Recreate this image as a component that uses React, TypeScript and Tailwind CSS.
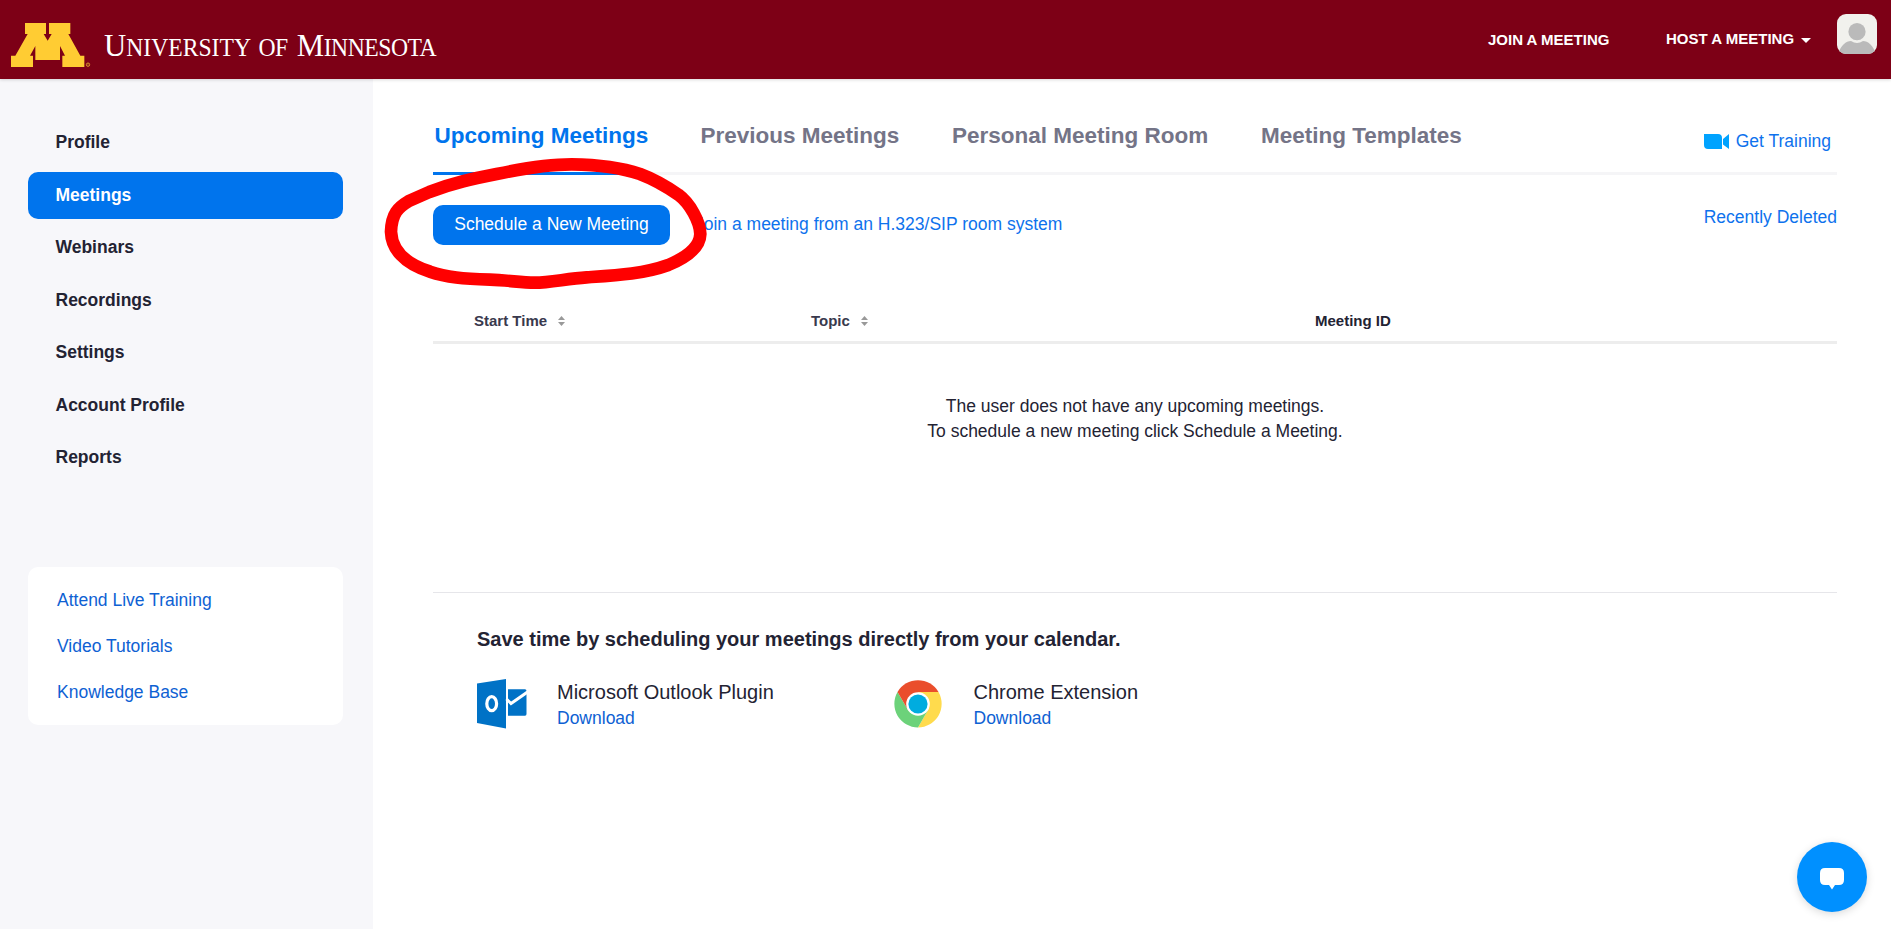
import React from 'react';

const navItems = ['Profile', 'Meetings', 'Webinars', 'Recordings', 'Settings', 'Account Profile', 'Reports'];
const helpLinks = ['Attend Live Training', 'Video Tutorials', 'Knowledge Base'];

function LogoMark() {
  return (
    <svg className="ml-[11px] mt-[23px] h-[45px] w-[80px] shrink-0" viewBox="33 69 240 135">
      <path
        fill="#ffcc33"
        d="M75 69H138V102H131L143 122L155 102H147V69H211V102H205L241 167H253V201H187V167H195L180 138V180H106V138L90 167H99V201H33V167H46L83 102H75Z"
      />
      <circle cx="264" cy="194" r="5" fill="none" stroke="#d99a2c" strokeWidth="3" />
      <circle cx="264" cy="194" r="1.5" fill="#d99a2c" />
    </svg>
  );
}

function Wordmark() {
  return (
    <div className="ml-[13px] mt-[21px] flex h-[48px] w-[340px] origin-left scale-x-[0.946] items-baseline whitespace-nowrap font-['Liberation_Serif',serif] text-[25px] leading-[48px] text-white">
      <span><span className="text-[32.5px]">U</span>NIVERSITY</span>
      <span className="ml-[8px] tracking-[-0.8px]">OF</span>
      <span className="ml-[10px] tracking-[-0.5px]"><span className="text-[32.5px]">M</span>INNESOTA</span>
    </div>
  );
}

function Header() {
  return (
    <header className="relative z-10 flex h-[79px] bg-[#7d0016] shadow-[0_1px_3px_rgba(0,0,0,0.15)]">
      <LogoMark />
      <Wordmark />
      <div className="ml-auto flex text-[15px] leading-[20px] font-bold whitespace-nowrap text-white">
        <a className="mt-[30px] w-[178px]">JOIN A MEETING</a>
        <a className="mt-[29px] flex w-[171px]">
          HOST A MEETING
          <span className="mt-[9px] ml-[7px] h-0 w-0 border-x-[5px] border-t-[5px] border-x-transparent border-t-white" />
        </a>
        <svg className="mt-[14px] mr-[14px] h-10 w-10 rounded-[9px]" viewBox="0 0 40 40">
          <rect width="40" height="40" fill="#f1f1ed" />
          <circle cx="20" cy="17.7" r="8.6" fill="#bababa" />
          <path d="M1 40C4 31 9 27 14 27C18 29.500 22 29.500 26 27C31 27 36 31 39 40Z" fill="#bababa" />
        </svg>
      </div>
    </header>
  );
}

function Sidebar() {
  return (
    <aside className="w-[373px] shrink-0 bg-[#f7f7fa] px-[28px] pt-[40.5px]">
      <nav className="mr-[2px] flex flex-col gap-[5.5px]">
        {navItems.map((item) => (
          <a
            key={item}
            className={
              item === 'Meetings'
                ? 'flex h-[47px] items-center rounded-[10px] bg-[#0074ed] pb-px pl-[27.5px] font-bold text-white'
                : 'flex h-[47px] items-center pb-px pl-[27.5px] font-bold text-[#232333]'
            }
          >
            {item}
          </a>
        ))}
      </nav>
      <div className="mt-[85.5px] mr-[2px] flex h-[158px] flex-col gap-[21px] rounded-[10px] bg-white pt-[21px] pl-[29px] text-[#0e61d3]">
        {helpLinks.map((link) => (
          <a key={link}>{link}</a>
        ))}
      </div>
    </aside>
  );
}

function Tabs() {
  return (
    <div className="flex h-[96px] border-b-[3px] border-[#f5f5f7]">
      <div className="flex text-[22.5px] leading-[30px] font-bold whitespace-nowrap text-[#747487]">
        <a className="h-[96px] w-[216px] border-b-[3px] border-[#0074ed] pt-[42px] pl-[1.5px] text-[#0074ed]">Upcoming Meetings</a>
        <a className="ml-[51.5px] w-[251.5px] pt-[42px]">Previous Meetings</a>
        <a className="w-[309px] pt-[42px]">Personal Meeting Room</a>
        <a className="pt-[42px]">Meeting Templates</a>
      </div>
      <a className="mt-[50px] mr-[6px] ml-auto flex h-[25px] items-start gap-[7px] whitespace-nowrap text-[#0e72ed]">
        <svg className="mt-[5px] h-[15px] w-[25px]" viewBox="0 0 25 15">
          <path d="M0 0H14Q18 0 18 4V15H4Q0 15 0 11ZM19 5L25 0V15L19 10.500Z" fill="#00a3ff" />
        </svg>
        Get Training
      </a>
    </div>
  );
}

function SortIcon() {
  return (
    <svg className="mt-[5px] ml-[11px] h-[10px] w-[7px]" viewBox="0 0 7 10">
      <path d="M0 4L3.500 0L7 4ZM0 6L3.500 10L7 6Z" fill="#999" />
    </svg>
  );
}

function TableHead() {
  return (
    <div className="mt-[66px] flex h-[33px] border-b-[3px] border-[#ededed] text-[15px] leading-[20px] font-bold text-[#39394d]">
      <div className="flex w-[378px] pl-[41px]">Start Time<SortIcon /></div>
      <div className="flex w-[504px]">Topic<SortIcon /></div>
      <div className="text-[#232333]">Meeting ID</div>
    </div>
  );
}

function OutlookIcon() {
  return (
    <svg className="h-[50px] w-[50px]" viewBox="0 0 50 50">
      <path d="M0 4.500L29 0V49.500L0 44Z" fill="#0072c6" />
      <path d="M31 10.300H48Q49.500 10.300 49.500 12V35Q49.500 36.700 48 36.700H31Z" fill="#0072c6" />
      <path d="M29.500 20L34 24.500L50.500 13" fill="none" stroke="#fff" strokeWidth="3" />
      <ellipse cx="14.700" cy="24.700" rx="4.900" ry="7" fill="none" stroke="#fff" strokeWidth="3.200" />
    </svg>
  );
}

function ChromeIcon() {
  return (
    <svg className="mt-px h-[48px] w-[48px]" viewBox="0 0 48 48">
      <path d="M24 24L3.500 12A23.700 23.700 0 0 1 44.500 12Z" fill="#ea4e2c" />
      <path d="M24 12H44.500A23.700 23.700 0 0 1 24 47.500L34 30Z" fill="#ffdb4d" />
      <path d="M3.500 12A23.700 23.700 0 0 0 24 47.500L34 30L14 30Z" fill="#6cd27a" />
      <path d="M3.500 12L14 30L24 12Z" fill="#ea4e2c" />
      <circle cx="24" cy="24" r="11.800" fill="#fff" />
      <circle cx="24" cy="24" r="9.600" fill="#00acdf" />
    </svg>
  );
}

function Plugin({ icon, name, className }: { icon: React.ReactNode; name: string; className: string }) {
  return (
    <div className={className}>
      {icon}
      <div className="flex flex-col gap-px pt-px">
        <span className="text-[20px]">{name}</span>
        <a className="text-[#0e61d3]">Download</a>
      </div>
    </div>
  );
}

function RedMarker() {
  return (
    <svg className="pointer-events-none absolute top-[100px] left-[370px] h-[200px] w-[350px]" viewBox="0 0 1050 600">
      <path
        d="M178 276C250 248 310 236 380 222C470 203 540 193 605 193C690 194 760 205 810 222C850 237 890 260 925 284C960 310 990 365 991 402C990 440 955 470 895 495C820 522 740 526 650 532C590 536 540 548 495 548C450 548 420 541 360 539C280 536 230 532 180 515C100 490 65 445 63 395C65 340 85 322 115 304Z"
        fill="none"
        stroke="#ff0000"
        strokeWidth="38"
        strokeLinejoin="round"
      />
    </svg>
  );
}

export default function App() {
  return (
    <div className="relative flex h-[929px] w-[1891px] flex-col overflow-hidden bg-white font-['Liberation_Sans',Arial,sans-serif] text-[17.5px] leading-[25px] text-[#232333]">
      <Header />
      <div className="flex flex-1">
        <Sidebar />
        <main className="ml-[60px] w-[1404px]">
          <Tabs />
          <div className="mt-[30px] flex h-[40px] text-[#0e72ed]">
            <button className="h-[40px] w-[237px] rounded-[10px] bg-[#0074ed] pb-px whitespace-nowrap text-white">Schedule a New Meeting</button>
            <a className="mt-[7px] ml-[25px]">Join a meeting from an H.323/SIP room system</a>
            <a className="ml-auto">Recently Deleted</a>
          </div>
          <TableHead />
          <p className="mt-[50px] text-center">
            The user does not have any upcoming meetings.
            <br />
            To schedule a new meeting click Schedule a Meeting.
          </p>
          <section className="mt-[148px] border-t border-[#e6e6ea] pl-[44px]">
            <h2 className="mt-[34px] text-[20px] leading-[25px] font-bold">Save time by scheduling your meetings directly from your calendar.</h2>
            <div className="mt-[27px] flex">
              <Plugin icon={<OutlookIcon />} name="Microsoft Outlook Plugin" className="flex w-[417px] gap-[30px]" />
              <Plugin icon={<ChromeIcon />} name="Chrome Extension" className="flex gap-[31.5px]" />
            </div>
          </section>
        </main>
      </div>
      <RedMarker />
      <button className="absolute top-[842px] left-[1797px] flex h-[70px] w-[70px] justify-center rounded-full bg-[#0090ff] pt-[26px] shadow-[0_2px_8px_rgba(0,0,0,0.15)]">
        <svg className="h-[22px] w-[24px]" viewBox="0 0 24 22">
          <path d="M5 0H19Q24 0 24 5V12Q24 17 19 17H15L12 21.500L9 17H5Q0 17 0 12V5Q0 0 5 0Z" fill="#fff" />
        </svg>
      </button>
    </div>
  );
}
